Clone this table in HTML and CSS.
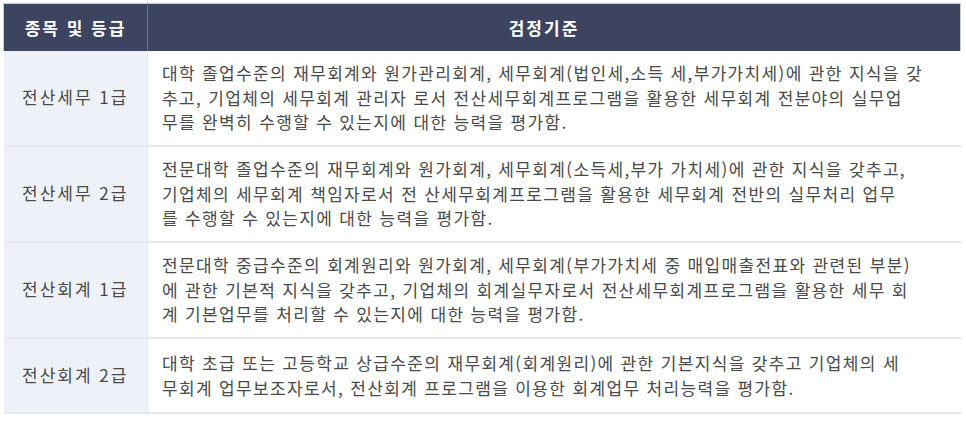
FILE: index.html
```html
<!DOCTYPE html>
<html lang="ko">
<head>
<meta charset="utf-8">
<title>검정기준</title>
<link rel="stylesheet" href="styles.css">
</head>
<body>
<table class="grade-table">
  <thead>
    <tr>
      <th class="col-grade">종목 및 등급</th>
      <th class="col-desc">검정기준</th>
    </tr>
  </thead>
  <tbody>
    <tr class="row-3">
      <td class="grade">전산세무 1급</td>
      <td class="desc">대학 졸업수준의 재무회계와 원가관리회계, 세무회계(법인세,소득 세,부가가치세)에 관한 지식을 갖<br>추고, 기업체의 세무회계 관리자 로서 전산세무회계프로그램을 활용한 세무회계 전분야의 실무업<br>무를 완벽히 수행할 수 있는지에 대한 능력을 평가함.</td>
    </tr>
    <tr class="row-3">
      <td class="grade">전산세무 2급</td>
      <td class="desc">전문대학 졸업수준의 재무회계와 원가회계, 세무회계(소득세,부가 가치세)에 관한 지식을 갖추고,<br>기업체의 세무회계 책임자로서 전 산세무회계프로그램을 활용한 세무회계 전반의 실무처리 업무<br>를 수행할 수 있는지에 대한 능력을 평가함.</td>
    </tr>
    <tr class="row-3">
      <td class="grade">전산회계 1급</td>
      <td class="desc">전문대학 중급수준의 회계원리와 원가회계, 세무회계(부가가치세 중 매입매출전표와 관련된 부분)<br>에 관한 기본적 지식을 갖추고, 기업체의 회계실무자로서 전산세무회계프로그램을 활용한 세무 회<br>계 기본업무를 처리할 수 있는지에 대한 능력을 평가함.</td>
    </tr>
    <tr class="row-2">
      <td class="grade">전산회계 2급</td>
      <td class="desc">대학 초급 또는 고등학교 상급수준의 재무회계(회계원리)에 관한 기본지식을 갖추고 기업체의 세<br>무회계 업무보조자로서, 전산회계 프로그램을 이용한 회계업무 처리능력을 평가함.</td>
    </tr>
  </tbody>
</table>
</body>
</html>
```

FILE: styles.css
```css
html, body {
  margin: 0;
  padding: 0;
  background: #ffffff;
}

body {
  padding: 3px 5px 0 3px;
  font-family: "Noto Sans CJK KR", "Noto Sans", sans-serif;
}

.grade-table {
  width: 958px;
  border-collapse: collapse;
  table-layout: fixed;
}

.grade-table th {
  background: #3c4460;
  color: #ffffff;
  font-size: 17px;
  font-weight: 700;
  letter-spacing: 2px;
  height: 47px;
  padding: 0;
  text-align: center;
  box-sizing: border-box;
  border-top: 1px solid #c9cdd8;
}

.col-grade {
  width: 144px;
  border-left: 1px solid #c9cdd8;
  border-right: 1px solid #6a7188;
}

.col-desc {
  padding-right: 20px !important;
  border-right: 1px solid #c9cdd8;
}

.grade-table td {
  border-bottom: 2px solid #e6e8ec;
  color: #4a4a4a;
  line-height: 24.5px;
  vertical-align: middle;
}

.grade {
  background: #eef2f8;
  text-align: center;
  font-size: 17px;
  letter-spacing: 2px;
  padding: 0;
  border-right: 1px solid #e6e8ec;
}

.desc {
  font-size: 17px;
  padding: 10px 0 9px 14px;
  letter-spacing: 1.35px;
  white-space: nowrap;
}

.row-3 td {
  height: 75px;
}

.row-2 td {
  height: 54px;
}
```
